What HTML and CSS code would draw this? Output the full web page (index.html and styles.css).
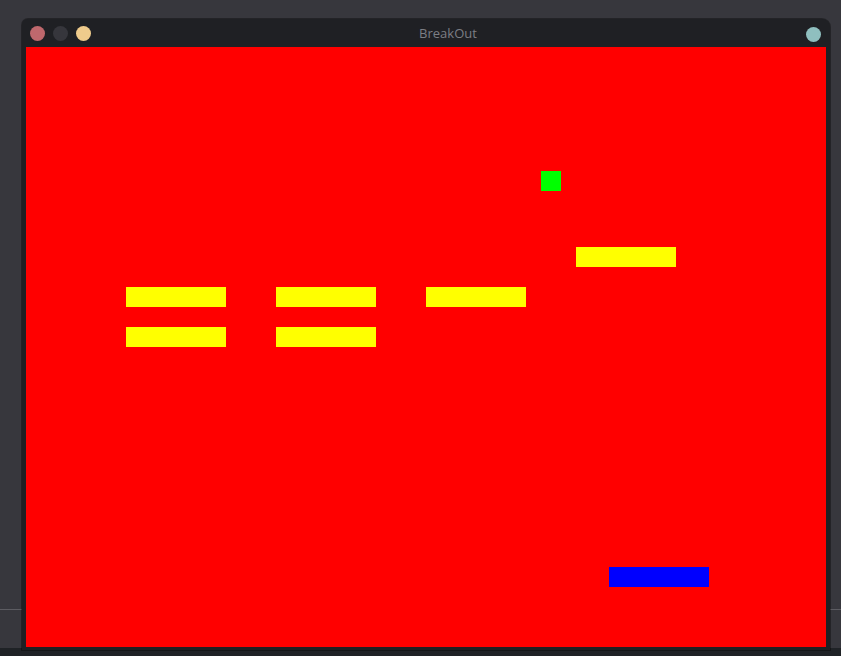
FILE: index.html
```html
<!DOCTYPE html>
<html>
<head>
<meta charset="utf-8">
<title>BreakOut</title>
<link rel="stylesheet" href="styles.css">
</head>
<body>
<div class="desktop">
  <div class="divider"></div>
  <div class="bottombar"></div>
  <div class="window">
    <div class="titlebar">
      <div class="lights">
        <span class="light close"></span>
        <span class="light min"></span>
        <span class="light max"></span>
      </div>
      <div class="title">BreakOut</div>
      <span class="light extra"></span>
    </div>
    <div class="canvas">
      <div class="ball" style="left:515px;top:124px"></div>
      <div class="brick" style="left:550px;top:200px"></div>
      <div class="brick" style="left:100px;top:240px"></div>
      <div class="brick" style="left:250px;top:240px"></div>
      <div class="brick" style="left:400px;top:240px"></div>
      <div class="brick" style="left:100px;top:280px"></div>
      <div class="brick" style="left:250px;top:280px"></div>
      <div class="paddle" style="left:583px;top:520px"></div>
    </div>
  </div>
</div>
</body>
</html>
```
FILE: styles.css
```css
html, body {
  margin: 0;
  padding: 0;
  overflow: hidden;
}
body {
  width: 841px;
  height: 656px;
  background: #37373d;
  font-family: "Open Sans", "Noto Sans", sans-serif;
}
.desktop {
  position: relative;
  width: 841px;
  height: 656px;
}
.divider {
  position: absolute;
  left: 0;
  right: 0;
  top: 609px;
  height: 1px;
  background: #5c5c62;
}
.bottombar {
  position: absolute;
  left: 0;
  right: 0;
  top: 648px;
  height: 8px;
  background: #1f2226;
}
.window {
  position: absolute;
  left: 22px;
  top: 19px;
  width: 808px;
  height: 631px;
  background: #1f2024;
  border-radius: 6px 8px 0 0;
  box-sizing: border-box;
  padding: 0 4px 3px 4px;
  box-shadow: 0 0 0 1px rgba(0,0,0,0.35);
  display: flex;
  flex-direction: column;
}
.titlebar {
  height: 28px;
  display: flex;
  align-items: center;
  padding: 0 5px 0 4px;
  box-sizing: border-box;
}
.lights {
  display: flex;
  gap: 8px;
}
.light {
  width: 15px;
  height: 15px;
  border-radius: 50%;
  display: block;
}
.close { background: #bf686d; }
.min { background: #36363c; }
.max { background: #efcb8c; }
.extra { background: #8fbfbf; margin-top: 2px; }
.title {
  flex: 1;
  text-align: center;
  color: #7c7e84;
  font-size: 13px;
  padding-right: 1px;
}
.canvas {
  position: relative;
  width: 800px;
  height: 600px;
  background: #ff0000;
}
.brick, .paddle, .ball {
  position: absolute;
}
.brick {
  width: 100px;
  height: 20px;
  background: #ffff00;
}
.paddle {
  width: 100px;
  height: 20px;
  background: #0000ff;
}
.ball {
  width: 20px;
  height: 20px;
  background: #00ff00;
}
```
